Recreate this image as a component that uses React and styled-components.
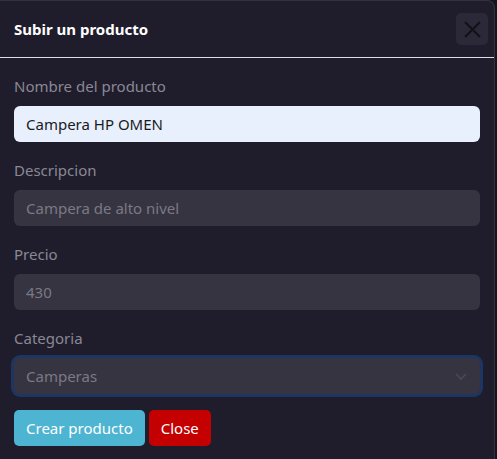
import React from "react";
import styled, { createGlobalStyle } from "styled-components";

const Global = createGlobalStyle`
  html, body { margin: 0; padding: 0; background: #12161c; }
  body { font-family: "Noto Sans", "Open Sans", sans-serif; }
  * { box-sizing: border-box; }
`;

const Modal = styled.div`
  width: 495px;
  min-height: 459px;
  background: #1f1d2b;
  border-top: 1px solid #34323f;
  border-right: 1px solid #34323f;
  border-top-right-radius: 8px;
  color: #fff;
`;

const Header = styled.div`
  height: 57px;
  display: flex;
  align-items: center;
  justify-content: space-between;
  padding: 0 6px 0 14px;
  border-bottom: 1px solid #dcdce4;
`;

const Title = styled.h5`
  margin: 0;
  font-size: 15px;
  font-weight: 700;
  color: #ffffff;
`;

const CloseX = styled.button`
  width: 32px;
  height: 32px;
  border: none;
  border-radius: 5px;
  background: #2b2937;
  display: flex;
  align-items: center;
  justify-content: center;
  padding: 0;
`;

const Body = styled.form`
  padding: 16px 14px 0 14px;
`;

const Group = styled.div`
  margin-bottom: 16px;
  display: flex;
  flex-direction: column;
`;

const Label = styled.label`
  font-size: 15px;
  line-height: 24px;
  margin-bottom: 8px;
  color: #8a8895;
`;

const Field = styled.div`
  height: 36px;
  border-radius: 6px;
  padding: 0 12px;
  display: flex;
  align-items: center;
  justify-content: space-between;
  font-size: 15px;
  background: ${(p) => (p.$filled ? "#e8f0fe" : "#363441")};
  color: ${(p) => (p.$filled ? "#1a1a1a" : "#7b7985")};
  box-shadow: ${(p) => (p.$focus ? "0 0 0 3px #1d3560" : "none")};
`;

const Actions = styled.div`
  display: flex;
  gap: 4px;
`;

const Btn = styled.button`
  height: 36px;
  border: none;
  border-radius: 5px;
  padding: 0 12px;
  font-family: inherit;
  font-size: 15px;
  color: #fff;
  background: ${(p) => p.$bg};
`;

export default function App() {
  return (
    <>
      <Global />
      <Modal>
        <Header>
          <Title>Subir un producto</Title>
          <CloseX type="button" aria-label="Close">
            <svg width="17" height="17" viewBox="0 0 17 17">
              <path d="M1 1 L16 16 M16 1 L1 16" stroke="#121118" strokeWidth="2" />
            </svg>
          </CloseX>
        </Header>
        <Body>
          <Group>
            <Label>Nombre del producto</Label>
            <Field $filled>Campera HP OMEN</Field>
          </Group>
          <Group>
            <Label>Descripcion</Label>
            <Field>Campera de alto nivel</Field>
          </Group>
          <Group>
            <Label>Precio</Label>
            <Field>430</Field>
          </Group>
          <Group>
            <Label>Categoria</Label>
            <Field $focus>
              Camperas
              <svg width="14" height="10" viewBox="0 0 14 10">
                <path d="M2 3 L7 8 L12 3" stroke="#4a4857" strokeWidth="1.6" fill="none" />
              </svg>
            </Field>
          </Group>
          <Actions>
            <Btn type="button" $bg="#4db4d1">Crear producto</Btn>
            <Btn type="button" $bg="#c50000">Close</Btn>
          </Actions>
        </Body>
      </Modal>
    </>
  );
}
